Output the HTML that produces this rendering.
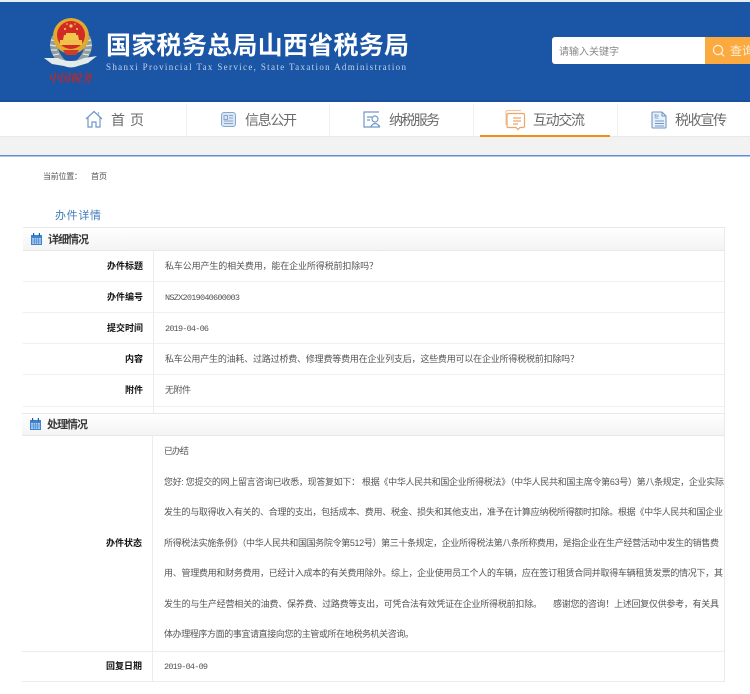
<!DOCTYPE html>
<html lang="zh-CN">
<head>
<meta charset="utf-8">
<title>办件详情</title>
<style>
html,body{margin:0;padding:0;background:#fff;width:750px;height:694px;overflow:hidden}
svg{display:block;filter:blur(.35px)}
text{font-family:"Liberation Sans","Noto Sans CJK SC",sans-serif}
.nav{font-size:14px;fill:#6a6a6a}
.b{font-size:9px;fill:#555}
.s{font-size:8px;fill:#555}
.l{font-size:9px;fill:#111;font-weight:700;text-anchor:end}
.h{font-size:11px;fill:#3a3a3a;font-weight:700}
.m{font-family:"Liberation Mono",monospace;font-size:8.5px;fill:#555}
</style>
</head>
<body>
<svg width="750" height="694" viewBox="0 0 750 694" xmlns="http://www.w3.org/2000/svg">
<defs>
<linearGradient id="hd" x1="0" y1="0" x2="0" y2="1"><stop offset="0" stop-color="#fff"/><stop offset="1" stop-color="#f4f4f4"/></linearGradient>
<g id="cal">
<rect x="0" y="2" width="11" height="10" fill="#3d84d0"/>
<rect x="1" y="5" width="9" height="6" fill="#a9cbed"/>
<path d="M1 7h9M1 9h9M3.500 5v6M5.500 5v6M7.500 5v6" stroke="#3d84d0" stroke-width=".6"/>
<rect x="2" y="0" width="1.200" height="3" fill="#1f5fa8"/><rect x="7.800" y="0" width="1.200" height="3" fill="#1f5fa8"/>
</g>
</defs>

<rect width="750" height="694" fill="#fff"/>
<!-- header -->
<rect y="0" width="750" height="2" fill="#e6edf5"/>
<rect y="2" width="750" height="99" fill="#1a55a6"/>
<rect y="100" width="750" height="2" fill="#1a4f9c"/>

<!-- emblem -->
<g>
<path d="M52 36Q46 50 58 62L65 60Q55 50 57 34Z" fill="#8f9e9f"/>
<path d="M90 36Q96 50 84 62L77 60Q87 50 85 34Z" fill="#8f9e9f"/>
<path d="M51 40l5 1M50 45l6 1M51 50l6 0M53 55l6-1M91 40l-5 1M92 45l-6 1M91 50l-6 0M89 55l-6-1" stroke="#e2e7e6" stroke-width="1.200"/>
<path d="M44 58L58 58Q71 64 84 58L97 56L88 63L78 66Q71 69 64 66L52 64Z" fill="#e4e9ea"/>
<circle cx="71" cy="36" r="18" fill="#e0a92f"/>
<circle cx="71" cy="35" r="14" fill="#d22a24"/>
<path d="M60 40h22v5H60z" fill="#eec24a"/>
<path d="M63 40l1-5h14l1 5zM66 35h10v-2H66z" fill="#f0c64c"/>
<circle cx="71" cy="26" r="1.600" fill="#f6d154"/>
<circle cx="65" cy="29" r="1" fill="#f6d154"/><circle cx="77" cy="29" r="1" fill="#f6d154"/>
<circle cx="67" cy="24" r=".8" fill="#f6d154"/><circle cx="75" cy="24" r=".8" fill="#f6d154"/>
<path d="M63 50h16l-3 5H66z" fill="#d33a2a"/>
<text x="48" y="82" textLength="44" style="font-size:11px;font-family:'Liberation Serif','Noto Serif CJK SC',serif;font-weight:700;font-style:italic;fill:#b92a2c">中国税务</text>
</g>

<text x="106" y="54" textLength="303" lengthAdjust="spacing" style="font-size:25px;font-weight:700;fill:#fff">国家税务总局山西省税务局</text>
<text x="106" y="70" textLength="300" lengthAdjust="spacing" style="font-family:'Liberation Serif',serif;font-size:9px;fill:#c3d3e8">Shanxi Provincial Tax Service, State Taxation Administration</text>

<!-- search -->
<rect x="552" y="37" width="160" height="27" rx="3" fill="#fff"/>
<path d="M705 37h45v27h-45z" fill="#fbaa40"/>
<text x="559" y="55" textLength="60" style="font-size:10px;fill:#888">请输入关键字</text>
<circle cx="718" cy="50" r="4.600" fill="none" stroke="#fff" stroke-opacity=".85" stroke-width="1.200"/>
<path d="M721.300 53.500l2.800 2.800" stroke="#fff" stroke-opacity=".85" stroke-width="1.200"/>
<text x="730" y="55" style="font-size:12px;fill:#fff;fill-opacity:.8">查询</text>

<!-- nav -->
<rect y="102" width="750" height="35" fill="#fff"/>
<rect y="137" width="750" height="18" fill="#f2f2f2"/>
<rect y="136" width="750" height="1" fill="#e9e9e9"/>
<rect y="155" width="750" height="1.500" fill="#5e8fd4"/>
<path d="M186.500 104v32M329.500 104v32M473.500 104v32M617.500 104v32" stroke="#edf0f4" stroke-width="1"/>
<rect x="480" y="135" width="130" height="2" fill="#ef8f1a"/>

<!-- home icon -->
<g fill="none" stroke="#6f98c8" stroke-width="1.200">
<path d="M86 119l8-7.500 8 7.500M88 117.500V127h4v-5h4v5h4v-9.500"/>
<path d="M98.500 112v3" stroke="#9fb9d8"/>
</g>
<text x="111" y="125" class="nav" textLength="33" lengthAdjust="spacing">首 页</text>

<!-- info icon -->
<rect x="221.500" y="112.500" width="14" height="14" rx="2.500" fill="#dbe6f3" stroke="#88a7cf"/>
<path d="M224 115.500h3.500v4H224zM229 115.500h4M229 118h4M224 121h9M224 123.500h9" stroke="#88a7cf" fill="none"/>
<text x="245" y="125" class="nav" textLength="52">信息公开</text>

<!-- service icon -->
<g fill="none" stroke="#6f98c8" stroke-width="1.200">
<path d="M379 112h-15v15h15v-2"/>
<path d="M367 117h5M367 120h3"/>
<circle cx="375" cy="119" r="3"/>
<path d="M370.500 127q4.500-7 9.500 0"/>
</g>
<text x="389" y="125" class="nav" textLength="51">纳税服务</text>

<!-- exchange icon -->
<g fill="none" stroke="#eba66c" stroke-width="1.200">
<path d="M506 125v-13q0-1.500 1.500-1.500H521" stroke="#f3c79f"/>
<path d="M510 113.500h13q1.500 0 1.500 1.500v11q0 1.500-1.500 1.500h-3l-2 2-2-2h-8q-1 0-1-1.500V115q0-1.500 2-1.500z"/>
<path d="M513 118h8M513 121h8M513 124h5"/>
</g>
<text x="533" y="125" class="nav" textLength="52">互动交流</text>

<!-- tax icon -->
<path d="M653 112h9l4 4v11q0 1-1 1h-12q-1 0-1-1v-14q0-1 1-1z" fill="#eaf1f9" stroke="#6f98c8" stroke-width="1.100"/>
<path d="M662 112v4h4M655 121h9M655 123.500h9M655 126h9" fill="none" stroke="#6f98c8"/>
<text x="654" y="118.500" style="font-size:5px;fill:#6f98c8">税</text>
<text x="675" y="125" class="nav" textLength="52">税收宣传</text>

<!-- breadcrumb -->
<text x="43" y="179" class="s" textLength="39">当前位置：</text>
<text x="91" y="179" class="s" textLength="16">首页</text>
<text x="55" y="219" textLength="46" style="font-size:11px;fill:#3f7ab8">办件详情</text>

<!-- section 1 -->
<rect x="23" y="227" width="702" height="23" fill="url(#hd)"/>
<path d="M23 227.500h702M23 250.500h702" stroke="#e8e8e8"/>
<use href="#cal" x="31" y="233"/>
<text x="48" y="243" class="h" textLength="41">详细情况</text>

<path d="M23 281.500h702M23 312.500h702M23 343.500h702M23 374.500h702M23 406.500h702" stroke="#f0f0f0"/>
<path d="M153.500 250v163" stroke="#ececec"/>

<text x="143" y="269" class="l">办件标题</text>
<text x="165" y="269" class="b" textLength="213">私车公用产生的相关费用，能在企业所得税前扣除吗？</text>
<text x="143" y="300" class="l">办件编号</text>
<text x="165" y="300" class="m" textLength="75">NSZX2019040600003</text>
<text x="143" y="331" class="l">提交时间</text>
<text x="165" y="331" class="m" textLength="44">2019-04-06</text>
<text x="143" y="362" class="l">内容</text>
<text x="165" y="362" class="b" textLength="414">私车公用产生的油耗、过路过桥费、修理费等费用在企业列支后，这些费用可以在企业所得税税前扣除吗？</text>
<text x="143" y="393" class="l">附件</text>
<text x="165" y="393" class="b" textLength="26">无附件</text>

<!-- section 2 -->
<rect x="22" y="413" width="703" height="22" fill="url(#hd)"/>
<path d="M22 413.500h703M22 435.500h703" stroke="#e8e8e8"/>
<use href="#cal" x="30" y="418"/>
<text x="47" y="428" class="h" textLength="41">处理情况</text>

<path d="M152.500 435v246" stroke="#ececec"/>
<path d="M22 651.500h702M22 681.500h702" stroke="#ececec"/>
<path d="M724.500 227v455" stroke="#e8eaf0"/>

<text x="164" y="454" class="b" textLength="25">已办结</text>
<text x="164" y="485" class="b" textLength="560">您好: 您提交的网上留言咨询已收悉，现答复如下： 根据《中华人民共和国企业所得税法》（中华人民共和国主席令第63号）第八条规定，企业实际</text>
<text x="164" y="515" class="b" textLength="559">发生的与取得收入有关的、合理的支出，包括成本、费用、税金、损失和其他支出，准予在计算应纳税所得额时扣除。根据《中华人民共和国企业</text>
<text x="164" y="546" class="b" textLength="555">所得税法实施条例》（中华人民共和国国务院令第512号）第三十条规定，企业所得税法第八条所称费用，是指企业在生产经营活动中发生的销售费</text>
<text x="164" y="576" class="b" textLength="559">用、管理费用和财务费用，已经计入成本的有关费用除外。综上，企业使用员工个人的车辆，应在签订租赁合同并取得车辆租赁发票的情况下，其</text>
<text x="164" y="607" class="b" textLength="378">发生的与生产经营相关的油费、保养费、过路费等支出，可凭合法有效凭证在企业所得税前扣除。</text>
<text x="553" y="607" class="b" textLength="166">感谢您的咨询！上述回复仅供参考，有关具</text>
<text x="164" y="637" class="b" textLength="250">体办理程序方面的事宜请直接向您的主管或所在地税务机关咨询。</text>
<text x="142" y="546" class="l">办件状态</text>

<text x="142" y="669" class="l">回复日期</text>
<text x="164" y="669" class="m" textLength="44">2019-04-09</text>
</svg>
</body>
</html>
